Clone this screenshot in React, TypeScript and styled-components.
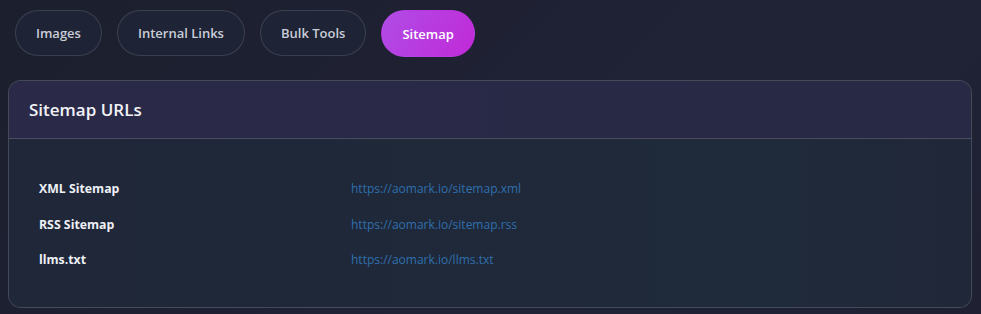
import React from "react";
import styled, { createGlobalStyle } from "styled-components";

const Global = createGlobalStyle`
  html, body { margin: 0; padding: 0; }
  body {
    background: linear-gradient(135deg, #1c1f2d 0%, #202236 60%, #1f2133 100%);
    font-family: "Open Sans", "Noto Sans", sans-serif;
    width: 981px;
    height: 314px;
    overflow: hidden;
  }
`;

const Page = styled.div`
  display: flex;
  flex-direction: column;
  gap: 23px;
  padding: 10px 9px 0 8px;
`;

const Tabs = styled.div`
  display: flex;
  gap: 15px;
  padding-left: 7px;
  align-items: center;
`;

const Tab = styled.button<{ $active?: boolean }>`
  height: ${(p) => (p.$active ? 47 : 46)}px;
  padding: 0 20px;
  border-radius: 24px;
  font-family: inherit;
  font-size: 13px;
  font-weight: 600;
  cursor: pointer;
  color: ${(p) => (p.$active ? "#ffffff" : "#c9cdd8")};
  background: ${(p) =>
    p.$active
      ? "linear-gradient(120deg, #b04ce6 0%, #c02ad8 100%)"
      : "#1e2435"};
  border: 1px solid ${(p) => (p.$active ? "transparent" : "rgba(255,255,255,0.13)")};
  align-self: flex-start;
`;

const Card = styled.section`
  border: 1px solid rgba(255, 255, 255, 0.16);
  border-radius: 13px;
  overflow: hidden;
  background: #1f2839;
`;

const CardHeader = styled.div`
  height: 57px;
  display: flex;
  align-items: center;
  padding: 0 20px;
  background: linear-gradient(90deg, #2a2a48 0%, #282945 100%);
  border-bottom: 1px solid rgba(255, 255, 255, 0.16);
`;

const Title = styled.h2`
  margin: 0;
  font-size: 17px;
  font-weight: 600;
  color: #f2f3f8;
`;

const CardBody = styled.div`
  padding: 32px 20px 29px;
  background: linear-gradient(90deg, #1f2739 0%, #1f2a3a 80%, #202739 100%);
`;

const Table = styled.div`
  display: grid;
  grid-template-columns: 312px 1fr;
`;

const Label = styled.div`
  height: 35.5px;
  display: flex;
  align-items: center;
  padding: 0 10px;
  font-size: 12.3px;
  font-weight: 700;
  color: #eef0f5;
`;

const Link = styled.a`
  height: 35.5px;
  display: flex;
  align-items: center;
  padding: 0 10px;
  font-size: 12px;
  color: #2f6fae;
  text-decoration: none;
`;

const rows = [
  ["XML Sitemap", "https://aomark.io/sitemap.xml"],
  ["RSS Sitemap", "https://aomark.io/sitemap.rss"],
  ["llms.txt", "https://aomark.io/llms.txt"],
];

export default function App() {
  return (
    <>
      <Global />
      <Page>
        <Tabs>
          <Tab>Images</Tab>
          <Tab>Internal Links</Tab>
          <Tab>Bulk Tools</Tab>
          <Tab $active>Sitemap</Tab>
        </Tabs>
        <Card>
          <CardHeader>
            <Title>Sitemap URLs</Title>
          </CardHeader>
          <CardBody>
            <Table>
              {rows.map(([label, url]) => (
                <React.Fragment key={label}>
                  <Label>{label}</Label>
                  <Link href={url}>{url}</Link>
                </React.Fragment>
              ))}
            </Table>
          </CardBody>
        </Card>
      </Page>
    </>
  );
}
